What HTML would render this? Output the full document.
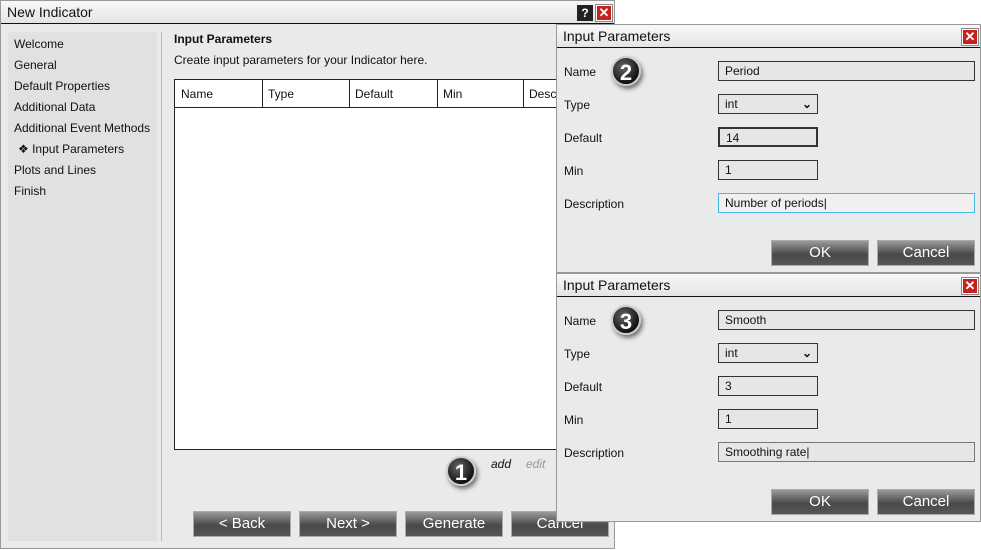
<!DOCTYPE html>
<html><head><style>
*{box-sizing:border-box;margin:0;padding:0}
body{width:981px;height:550px;background:#fff;font-family:"Liberation Sans",Arial,sans-serif;font-size:12px;color:#111;position:relative;overflow:hidden}
.abs{position:absolute}
.win{position:absolute;background:#e9eaeb;border:1px solid #999}
.tb{position:absolute;left:0;right:0;top:0;height:23px;background:linear-gradient(#f8f8f8,#e4e4e4);border-bottom:1px solid #111;font-size:14px;padding:3px 6px}
.btn{position:absolute;height:26px;width:98px;background:linear-gradient(#9a9a9a,#4a4a4a 55%,#555);border:1px solid #aaa;color:#fff;font-size:15px;text-align:center;line-height:24px}
.inp{position:absolute;height:20px;border:1px solid #333;background:#e6e6e6;padding:2px 6px;font-size:12px}
.lbl{position:absolute;font-size:12px}
.x{position:absolute;width:16px;height:16px;background:#c8201c;border:1px solid #fff;outline:1px solid #888;color:#fff;font-weight:bold;font-size:13px;line-height:14px;text-align:center}
.badge{position:absolute;width:30px;height:30px;border-radius:50%;background:radial-gradient(circle at 40% 35%,#666,#111 70%);color:#fff;font-weight:bold;font-size:22px;text-align:center;line-height:30px;box-shadow:2px 3px 4px rgba(0,0,0,.5);border:2px solid #ccc}
.nav div{height:21px;line-height:21px;padding-left:6px;font-size:12px}
th,td{border-right:1px solid #333}
</style></head><body>
<div class="win" style="left:0;top:0;width:615px;height:549px;">
 <div class="tb">New Indicator</div>
 <div class="abs" style="left:576px;top:4px;width:16px;height:16px;background:#222;color:#fff;font-weight:bold;text-align:center;line-height:16px">?</div>
 <div class="x" style="left:595px;top:4px">✕</div>
 <div class="abs nav" style="left:7px;top:31px;width:149px;height:509px;background:#e1e1e1;padding-top:2px">
  <div>Welcome</div><div>General</div><div>Default Properties</div><div>Additional Data</div><div>Additional Event Methods</div><div style="padding-left:10px">❖ Input Parameters</div><div>Plots and Lines</div><div>Finish</div>
 </div>
 <div class="abs" style="left:160px;top:31px;width:1px;height:509px;background:#bbb"></div>
 <div class="abs" style="left:173px;top:31px;font-weight:bold">Input Parameters</div>
 <div class="abs" style="left:173px;top:52px">Create input parameters for your Indicator here.</div>
 <div class="abs" style="left:173px;top:78px;width:440px;height:371px;background:#fff;border:1px solid #222">
  <div class="abs" style="left:0;top:0;width:440px;height:28px;border-bottom:1px solid #222"></div>
  <div class="abs" style="left:6px;top:7px">Name</div>
  <div class="abs" style="left:87px;top:0;width:1px;height:28px;background:#222"></div>
  <div class="abs" style="left:93px;top:7px">Type</div>
  <div class="abs" style="left:174px;top:0;width:1px;height:28px;background:#222"></div>
  <div class="abs" style="left:180px;top:7px">Default</div>
  <div class="abs" style="left:262px;top:0;width:1px;height:28px;background:#222"></div>
  <div class="abs" style="left:268px;top:7px">Min</div>
  <div class="abs" style="left:348px;top:0;width:1px;height:28px;background:#222"></div>
  <div class="abs" style="left:354px;top:7px">Desc</div>
 </div>
 <div class="badge" style="left:445px;top:455px">1</div>
 <div class="abs" style="left:490px;top:456px;font-style:italic">add</div>
 <div class="abs" style="left:525px;top:456px;font-style:italic;color:#999">edit</div>
 <div class="btn" style="left:192px;top:510px">&lt; Back</div>
 <div class="btn" style="left:298px;top:510px">Next &gt;</div>
 <div class="btn" style="left:404px;top:510px">Generate</div>
 <div class="btn" style="left:510px;top:510px">Cancel</div>
</div>

<div class="win" style="left:556px;top:24px;width:425px;height:249px;">
 <div class="tb">Input Parameters</div>
 <div class="x" style="left:405px;top:4px">✕</div>
 <div class="lbl" style="left:7px;top:40px">Name</div>
 <div class="badge" style="left:54px;top:31px">2</div>
 <div class="inp" style="left:161px;top:36px;width:257px">Period</div>
 <div class="lbl" style="left:7px;top:73px">Type</div>
 <div class="inp" style="left:161px;top:69px;width:100px">int<span style="position:absolute;right:5px;font-weight:bold">⌄</span></div>
 <div class="lbl" style="left:7px;top:106px">Default</div>
 <div class="inp" style="left:161px;top:102px;width:100px;border-width:2px">14</div>
 <div class="lbl" style="left:7px;top:139px">Min</div>
 <div class="inp" style="left:161px;top:135px;width:100px">1</div>
 <div class="lbl" style="left:7px;top:172px">Description</div>
 <div class="inp" style="left:161px;top:168px;width:257px;border-color:#4ab8e0;background:#f0f0f0">Number of periods|</div>
 <div class="btn" style="left:214px;top:215px">OK</div>
 <div class="btn" style="left:320px;top:215px">Cancel</div>
</div>

<div class="win" style="left:556px;top:273px;width:425px;height:249px;">
 <div class="tb">Input Parameters</div>
 <div class="x" style="left:405px;top:4px">✕</div>
 <div class="lbl" style="left:7px;top:40px">Name</div>
 <div class="badge" style="left:54px;top:31px">3</div>
 <div class="inp" style="left:161px;top:36px;width:257px">Smooth</div>
 <div class="lbl" style="left:7px;top:73px">Type</div>
 <div class="inp" style="left:161px;top:69px;width:100px">int<span style="position:absolute;right:5px;font-weight:bold">⌄</span></div>
 <div class="lbl" style="left:7px;top:106px">Default</div>
 <div class="inp" style="left:161px;top:102px;width:100px">3</div>
 <div class="lbl" style="left:7px;top:139px">Min</div>
 <div class="inp" style="left:161px;top:135px;width:100px">1</div>
 <div class="lbl" style="left:7px;top:172px">Description</div>
 <div class="inp" style="left:161px;top:168px;width:257px;border-color:#777">Smoothing rate|</div>
 <div class="btn" style="left:214px;top:215px">OK</div>
 <div class="btn" style="left:320px;top:215px">Cancel</div>
</div>
</body></html>
